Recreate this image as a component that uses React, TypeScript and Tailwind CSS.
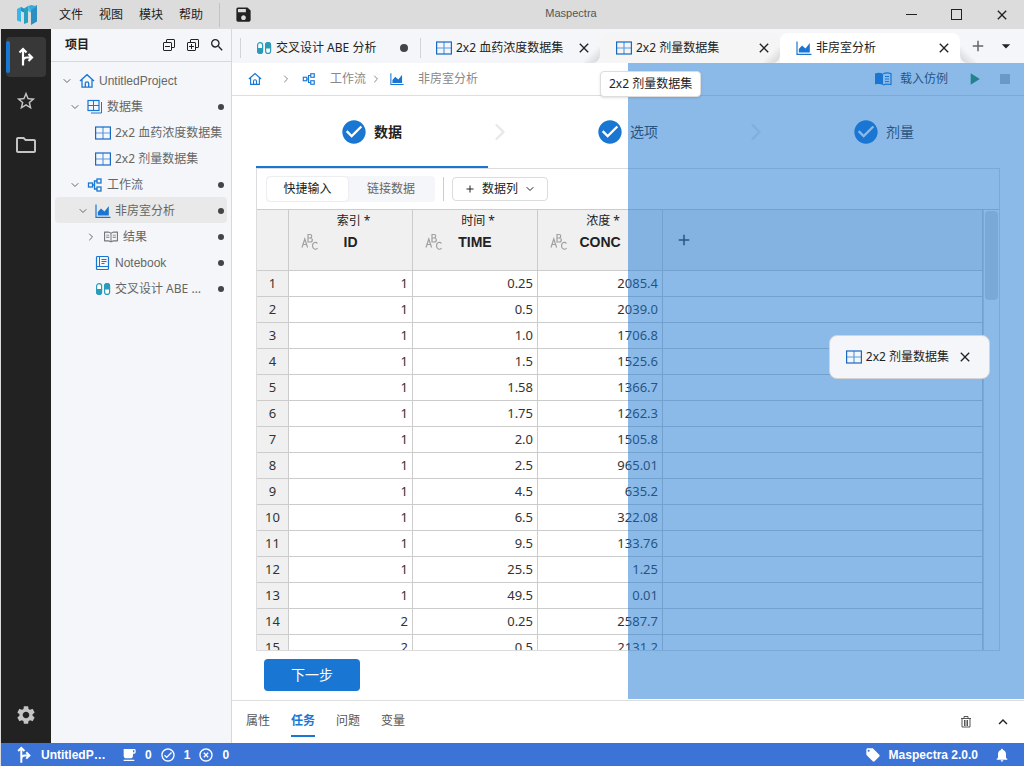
import { Fragment } from "react";
import type { ReactNode } from "react";
import { AiOutlineRead } from "react-icons/ai";
import {
  MdAdd,
  MdArrowDropDown,
  MdCheckCircle,
  MdClose,
  MdHighlightOff,
  MdKeyboardArrowUp,
  MdLocalCafe,
  MdLocalOffer,
  MdNotifications,
  MdOutlineCheckCircle,
  MdOutlineFolder,
  MdPlayArrow,
  MdSave,
  MdSearch,
  MdSettings,
  MdStarBorder,
} from "react-icons/md";
import { VscCollapseAll, VscExpandAll } from "react-icons/vsc";
import { ChevronDown, ChevronRight } from "lucide-react";

type IconProps = { className?: string };

function Logo({ className }: IconProps) {
  return (
    <svg viewBox="0 0 20 20" className={className} aria-hidden="true">
      <path d="M0 4l4-2v15l-4-1.500z" fill="#38b6ea" />
      <path d="M4 2l3 2.500v3L4 6z" fill="#1f86b8" />
      <path d="M7 3.500L11 1v16.500L7 19z" fill="#2b9fc0" />
      <path d="M4 2l3 1.500V7L4 5z" fill="#2596c4" />
      <path d="M11 1l3 2.500v4L11 6z" fill="#48c2e8" />
      <path d="M14 3l6-3v16.500L14 20z" fill="#2d8ec2" />
      <path d="M11 1l3.500-1L20 1.500 14 5z" fill="#3aa9d8" />
    </svg>
  );
}

function RouteIcon({ className }: IconProps) {
  return (
    <svg viewBox="0 0 20 20" className={className} fill="none" stroke="currentColor" strokeWidth="2.200" aria-hidden="true">
      <path d="M7 18.500V2.500M3.500 5.500L7 2l3.500 3.500M7 14.500c0-3 1.500-4 4-4h4.500M12.500 7l3.500 3.500-3.500 3.500" />
    </svg>
  );
}

function HomeIcon({ className }: IconProps) {
  return (
    <svg viewBox="0 0 16 16" className={className} fill="none" stroke="#1976d2" strokeWidth="1.300" aria-hidden="true">
      <path d="M1 8l7-6.300L15 8M3 6.500v7.700h10V6.500M6.300 14V10.500a1.700 1.700 0 0 1 3.400 0V14" />
    </svg>
  );
}

function AreaChartIcon({ className }: IconProps) {
  return (
    <svg viewBox="0 0 16 16" className={className} fill="none" aria-hidden="true">
      <path d="M1 1.500v12.800h14.500" stroke="#1976d2" strokeWidth="1.200" />
      <path d="M2.800 12.500V9L6 5.500l3.500 3L13.800 3v9.500z" fill="#1976d2" />
    </svg>
  );
}

function GridIcon({ className }: IconProps) {
  return (
    <svg viewBox="0 0 16 16" className={className} fill="none" aria-hidden="true">
      <path d="M8 2v12M1 8h14" stroke="#5b9be0" strokeWidth="1.200" />
      <rect x="0.600" y="2" width="14.800" height="12" stroke="#1769c4" strokeWidth="1.200" />
    </svg>
  );
}

function GridStackIcon({ className }: IconProps) {
  return (
    <svg viewBox="0 0 16 16" className={className} fill="none" stroke="#1976d2" aria-hidden="true">
      <rect x="1" y="1.500" width="11" height="10" strokeWidth="1.200" />
      <path d="M6.500 2v9.500M1 6.500h11M14.500 3v11H4" />
    </svg>
  );
}

function FlowIcon({ className }: IconProps) {
  return (
    <svg viewBox="0 0 16 16" className={className} fill="none" stroke="#1976d2" strokeWidth="1.300" aria-hidden="true">
      <rect x="1.500" y="6" width="4" height="4" />
      <rect x="10" y="2" width="4" height="4" />
      <rect x="10" y="10" width="4" height="4" />
      <path d="M5.500 8h2M10 4H7.500v8H10" />
    </svg>
  );
}

function NotebookIcon({ className }: IconProps) {
  return (
    <svg viewBox="0 0 16 16" className={className} fill="none" stroke="#1976d2" aria-hidden="true">
      <rect x="1.500" y="1.500" width="12" height="13" rx="1" strokeWidth="1.200" />
      <path d="M4.500 2v9.500M2 11.500h11.500M6.500 4.500h5M6.500 6.500h5M6.500 8.500h3" />
    </svg>
  );
}

function CapsuleIcon({ className }: IconProps) {
  return (
    <svg viewBox="0 0 16 16" className={className} aria-hidden="true">
      <rect x="1.600" y="2.600" width="5" height="10.800" rx="2.500" fill="#fff" stroke="#2a9cba" strokeWidth="1.200" />
      <path d="M1 8h6v3a3 3 0 0 1-6 0z" fill="#2a9cba" />
      <rect x="9.600" y="2.600" width="5" height="10.800" rx="2.500" fill="#fff" stroke="#2a9cba" strokeWidth="1.200" />
      <path d="M9 8.500h6V5a3 3 0 0 0-6 0z" fill="#2a9cba" />
    </svg>
  );
}

function ManualIcon({ className }: IconProps) {
  return (
    <svg viewBox="0 0 18 16" className={className} fill="none" aria-hidden="true">
      <path d="M1 2.500c3-1 6-.8 8 .5v11c-2-1-5-1.200-8-.500z" fill="#1976d2" />
      <path d="M9 3c2-1.300 5-1.500 8-.500v11c-3-.7-6-.5-8 .500" stroke="#1976d2" strokeWidth="1.200" />
      <path d="M11 5.500h4M11 8h4M11 10.500h4" stroke="#1976d2" />
    </svg>
  );
}

// staggered letters marking a text column
function AbcIcon() {
  return (
    <svg viewBox="0 0 18 18" className="size-[18px] text-[#a0a0a0]" fill="none" stroke="currentColor" strokeWidth="1.200" aria-hidden="true">
      <path d="M1 14.500l2.800-8.500 2.800 8.500M2 11.500h3.600" />
      <path d="M7 1.500v7.500h2.300a2 2 0 0 0 0-4H7h2a1.700 1.700 0 0 0 0-3.500z" />
      <path d="M16.500 10.500c-1.500-2-5-1.300-5 2.300s3.500 4.300 5 2.300" />
    </svg>
  );
}

function TrashIcon({ className }: IconProps) {
  return (
    <svg viewBox="0 0 16 16" className={className} fill="none" stroke="currentColor" aria-hidden="true">
      <path d="M3 4.500h10M6 4V2.500h4V4M4 4.500v8.500h8V4.500M6.500 6v6M8 6v6M9.500 6v6" />
    </svg>
  );
}

const grid = <GridIcon className="size-4 shrink-0" />;
const flow = <FlowIcon className="size-4" />;
const chart = <AreaChartIcon className="size-4 shrink-0" />;
const capsule = <CapsuleIcon className="size-4 shrink-0" />;

const menus = ["文件", "视图", "模块", "帮助"];

type TreeNode = {
  label: string;
  indent: string;
  icon: ReactNode;
  open?: boolean;
  dirty?: boolean;
  active?: boolean;
  latin?: boolean;
};

const tree: TreeNode[] = [
  { label: "UntitledProject", indent: "pl-1", icon: <HomeIcon className="size-4" />, open: true, latin: true },
  { label: "数据集", indent: "pl-3", icon: <GridStackIcon className="size-4" />, open: true, dirty: true },
  { label: "2x2 血药浓度数据集", indent: "pl-5", icon: grid },
  { label: "2x2 剂量数据集", indent: "pl-5", icon: grid },
  { label: "工作流", indent: "pl-3", icon: flow, open: true, dirty: true },
  { label: "非房室分析", indent: "pl-5", icon: chart, open: true, dirty: true, active: true },
  { label: "结果", indent: "pl-7", icon: <AiOutlineRead className="size-4 text-[#777]" />, open: false, dirty: true },
  { label: "Notebook", indent: "pl-5", icon: <NotebookIcon className="size-4" />, dirty: true, latin: true },
  { label: "交叉设计 ABE 分析", indent: "pl-5", icon: capsule, dirty: true },
];

const tabs = [
  { label: "交叉设计 ABE 分析", icon: capsule, dirty: true, style: "before:absolute before:left-0 before:h-5 before:w-px before:bg-[#d4d4d4]" },
  { label: "2x2 血药浓度数据集", icon: grid, style: "before:absolute before:left-0 before:h-5 before:w-px before:bg-[#d4d4d4]" },
  {
    label: "2x2 剂量数据集",
    icon: grid,
    style:
      "rounded-t-lg bg-[#f5f5f6] before:absolute before:bottom-0 before:-left-4 before:size-4 before:rounded-br-lg before:bg-linear-to-br before:from-transparent before:from-40% before:to-black/15",
  },
  {
    label: "非房室分析",
    icon: chart,
    active: true,
    style:
      "z-10 rounded-t-lg bg-white before:absolute before:bottom-0 before:-left-4 before:size-4 before:rounded-br-lg before:bg-linear-to-br before:from-transparent before:from-40% before:to-black/15 after:absolute after:-right-4 after:bottom-0 after:size-4 after:rounded-bl-lg after:bg-linear-to-bl after:from-transparent after:from-40% after:to-black/15",
  },
];

const steps = ["数据", "选项", "剂量"];

const columns = [
  { role: "索引", name: "ID", width: "w-[124px]" },
  { role: "时间", name: "TIME", width: "w-[125px]" },
  { role: "浓度", name: "CONC", width: "w-[125px]" },
];

const rows = [
  ["1", "0.25", "2085.4"],
  ["1", "0.5", "2039.0"],
  ["1", "1.0", "1706.8"],
  ["1", "1.5", "1525.6"],
  ["1", "1.58", "1366.7"],
  ["1", "1.75", "1262.3"],
  ["1", "2.0", "1505.8"],
  ["1", "2.5", "965.01"],
  ["1", "4.5", "635.2"],
  ["1", "6.5", "322.08"],
  ["1", "9.5", "133.76"],
  ["1", "25.5", "1.25"],
  ["1", "49.5", "0.01"],
  ["2", "0.25", "2587.7"],
  ["2", "0.5", "2131.2"],
];

function TitleBar() {
  return (
    <header className="flex h-[29px] shrink-0 items-center bg-[#dcdcdc] pl-4 text-[#222]">
      <Logo className="size-5" />
      <nav className="ml-[22px] flex gap-4">
        {menus.map((m) => (
          <button key={m} type="button">
            {m}
          </button>
        ))}
      </nav>
      <div className="ml-4 h-6 w-px bg-[#c2c2c2]" />
      <button type="button" aria-label="保存" className="ml-[14px]">
        <MdSave className="size-[19px]" />
      </button>
      <div className="flex-1 pb-0.5 text-center font-['Liberation_Sans'] text-[11px] text-[#555]">Maspectra</div>
      <button type="button" aria-label="最小化" className="flex w-[45px] justify-center">
        <span className="h-px w-[11px] bg-[#222]" />
      </button>
      <button type="button" aria-label="最大化" className="flex w-[45px] justify-center">
        <span className="size-[11px] border border-[#222]" />
      </button>
      <button type="button" aria-label="关闭" className="flex w-[45px] justify-center">
        <MdClose className="size-4" />
      </button>
    </header>
  );
}

function ActivityRail() {
  return (
    <aside className="flex w-[50px] shrink-0 flex-col items-center gap-1 bg-[#222] py-2 text-[#c4c4c4]">
      <button type="button" aria-label="项目" className="relative flex size-10 items-center justify-center rounded bg-[#383838] text-white">
        <span className="absolute inset-y-1 left-0 w-1 rounded-sm bg-[#1976d2]" />
        <RouteIcon className="size-5" />
      </button>
      <button type="button" aria-label="收藏" className="flex size-10 items-center justify-center">
        <MdStarBorder className="size-[22px]" />
      </button>
      <button type="button" aria-label="文件夹" className="flex size-10 items-center justify-center">
        <MdOutlineFolder className="size-6" />
      </button>
      <button type="button" aria-label="设置" className="mt-auto flex size-10 items-center justify-center">
        <MdSettings className="size-[22px]" />
      </button>
    </aside>
  );
}

function Sidebar() {
  return (
    <aside className="flex w-[181px] shrink-0 flex-col border-r border-[#d8d8d8] bg-[#f4f6f9]">
      <div className="flex h-[33px] items-center gap-2 border-b border-[#d8d8d8] pr-1.5 pl-3.5 text-[#222]">
        <h2 className="flex-1 text-xs font-bold">项目</h2>
        <button type="button" aria-label="全部折叠">
          <VscCollapseAll className="size-4" />
        </button>
        <button type="button" aria-label="全部展开">
          <VscExpandAll className="size-4" />
        </button>
        <button type="button" aria-label="搜索">
          <MdSearch className="size-4" />
        </button>
      </div>
      <ul className="px-1 pt-[5px] text-[#666]">
        {tree.map((node) => (
          <li
            key={node.label}
            className={`flex h-[26px] items-center gap-1 rounded pt-px pr-[3px] ${node.indent} ${node.active ? "bg-[#e9e9e9]" : ""}`}
          >
            <span className="flex w-4 shrink-0 justify-center">
              {node.open === true && <ChevronDown className="size-3" />}
              {node.open === false && <ChevronRight className="size-3" />}
            </span>
            <span className="shrink-0">{node.icon}</span>
            <span
              className={`min-w-0 flex-1 ${node.dirty ? "mr-2 truncate" : "whitespace-nowrap"} ${
                node.latin ? "font-['Liberation_Sans']" : ""
              }`}
            >
              {node.label}
            </span>
            {node.dirty && <span className="size-1.5 shrink-0 rounded-full bg-[#444]" />}
          </li>
        ))}
      </ul>
    </aside>
  );
}

function TabBar() {
  return (
    <div className="flex h-[34px] shrink-0 items-end overflow-hidden bg-[#f4f6f9] pl-2 text-[#222]">
      <div role="tablist" className="flex min-w-0">
        {tabs.map((tab) => (
          <div
            key={tab.label}
            role="tab"
            aria-selected={!!tab.active}
            className={`relative flex h-[30px] w-[180px] items-center gap-1 pr-2 pl-4 ${tab.style}`}
          >
            {tab.icon}
            <span className="min-w-0 flex-1 whitespace-nowrap">{tab.label}</span>
            {tab.dirty ? (
              <span className="mx-1 size-2 rounded-full bg-[#444]" />
            ) : (
              <button type="button" aria-label="关闭标签">
                <MdClose className="size-4" />
              </button>
            )}
          </div>
        ))}
      </div>
      <div className="flex h-[34px] flex-1 items-center justify-around px-1">
        <button type="button" aria-label="新建标签">
          <MdAdd className="size-[18px] text-[#666]" />
        </button>
        <button type="button" aria-label="标签列表">
          <MdArrowDropDown className="size-5" />
        </button>
      </div>
    </div>
  );
}

function Breadcrumb() {
  return (
    <div className="flex h-[33px] shrink-0 items-center border-b border-[#dedede] pr-3.5 pl-4 text-[#888]">
      <HomeIcon className="size-[14px]" />
      <ChevronRight className="ml-[18px] size-3" />
      <FlowIcon className="ml-2.5 size-[14px]" />
      <a href="#flow" className="ml-3.5">
        工作流
      </a>
      <ChevronRight className="ml-1 size-3" />
      <AreaChartIcon className="ml-2 size-[14px]" />
      <a href="#nca" className="ml-3.5">
        非房室分析
      </a>
      <button type="button" className="ml-auto flex items-center gap-2 text-[#333]">
        <ManualIcon className="h-4 w-[18px]" />
        载入仿例
      </button>
      <button type="button" aria-label="运行" className="ml-4">
        <MdPlayArrow className="size-5 text-[#2a8f4a]" />
      </button>
      <button type="button" aria-label="停止" className="ml-4">
        <span className="block size-2.5 bg-[#bdbdbd]" />
      </button>
    </div>
  );
}

function Stepper() {
  return (
    <ol className="flex h-[72px] shrink-0 text-sm text-[#333]">
      {steps.map((step, i) => (
        <Fragment key={step}>
          <li
            className={`flex flex-1 items-center justify-center gap-2 border-b-2 pt-0.5 ${
              i === 0 ? "border-[#1976d2] font-bold text-[#222]" : "border-transparent"
            }`}
          >
            <MdCheckCircle className="-m-0.5 size-7 text-[#1976d2]" />
            {step}
          </li>
          {i < steps.length - 1 && (
            <li aria-hidden="true" className="flex w-6 items-center justify-center">
              <ChevronRight className="size-7 shrink-0 text-[#e8e8e8]" />
            </li>
          )}
        </Fragment>
      ))}
    </ol>
  );
}

function DataTable() {
  return (
    <table className="min-w-0 flex-1 table-fixed border-separate border-spacing-0 text-[13px] text-[#333]">
      <thead>
        <tr className="h-[61px] bg-[#f0f0f0]">
          <th className="w-8 border-r border-b border-[#ccc]" />
          {columns.map((col) => (
            <th key={col.name} className={`relative border-r border-b border-[#ccc] p-0 align-top text-[#222] ${col.width}`}>
              <div className="pt-0.5 pl-1.5 text-xs leading-[18px] font-normal">{col.role} *</div>
              <div className="font-['Liberation_Sans'] text-sm leading-6">{col.name}</div>
              <span className="absolute top-[23px] left-3">
                <AbcIcon />
              </span>
            </th>
          ))}
          <th className="border-r border-b border-[#ccc] p-0 text-left">
            <button type="button" aria-label="添加列" className="ml-3 block">
              <MdAdd className="size-[18px]" />
            </button>
          </th>
        </tr>
      </thead>
      <tbody>
        {rows.map((row, i) => (
          <tr key={i} className="h-[26px] leading-5">
            <th scope="row" className="border-r border-b border-[#ccc] bg-[#f0f0f0] px-0 pt-0 pb-0.5 font-normal">
              {i + 1}
            </th>
            {row.map((value, j) => (
              <td key={j} className="border-r border-b border-[#ccc] pt-0 pr-1 pb-0.5 pl-0 text-right">
                {value}
              </td>
            ))}
            <td className="border-r border-b border-[#ccc] p-0" />
          </tr>
        ))}
      </tbody>
    </table>
  );
}

function Workspace() {
  return (
    <section className="relative flex min-h-0 flex-1 flex-col">
      <Breadcrumb />
      <div className="flex min-h-0 flex-1 flex-col px-6 pb-2">
        <Stepper />
        <div className="flex min-h-0 flex-1 flex-col border border-[#dcdcdc]">
          <div className="flex h-[41px] shrink-0 items-center border-b border-[#ccc] px-2 text-[#222]">
            <div className="ml-px flex h-[26px] rounded bg-[#f4f6f9] p-px text-[#666]">
              <button type="button" className="w-[81px] rounded bg-white text-[#222] shadow-[0_0_2px_rgba(0,0,0,0.12)]">
                快捷输入
              </button>
              <button type="button" className="w-[86px]">
                链接数据
              </button>
            </div>
            <div className="mx-2 h-6 w-px bg-[#ccc]" />
            <button type="button" className="flex h-6 w-24 items-center justify-center gap-1.5 rounded border border-[#dcdcdc]">
              <MdAdd className="size-3" />
              数据列
              <ChevronDown className="size-3" />
            </button>
          </div>
          <div className="flex min-h-0 flex-1 items-start overflow-hidden">
            <DataTable />
            <div className="w-4 self-stretch border-l border-[#dcdcdc] px-px pt-px">
              <div className="h-[89px] rounded-sm bg-[#dcdcdc]" />
            </div>
          </div>
        </div>
        <button type="button" className="mt-2 ml-2 h-8 w-24 shrink-0 rounded bg-[#1976d2] text-sm text-white">
          下一步
        </button>
      </div>

      {/* drop zone for the dragged tab */}
      <div className="pointer-events-none absolute inset-y-0 right-0 w-1/2 bg-[#1976d2]/50" />
      <div className="absolute top-[272px] right-[34px] flex h-11 items-center gap-1 rounded-lg border border-[#d4d4d4] bg-[#f4f6f9] px-4 text-[#222]">
        {grid}
        <span>2x2 剂量数据集</span>
        <MdClose className="ml-1 size-4" />
      </div>
      <div role="tooltip" className="absolute top-2 left-[368px] flex h-[26px] items-center rounded border border-[#ddd] bg-white px-2 text-[#222] shadow">
        2x2 剂量数据集
      </div>
    </section>
  );
}

function BottomPanel() {
  return (
    <div className="mt-px flex h-[43px] shrink-0 items-center border-t border-[#dedede] pr-3 pl-3.5 text-[#555]">
      <div className="flex flex-1 gap-[21px]">
        {["属性", "任务", "问题", "变量"].map((label) => (
          <button
            key={label}
            type="button"
            className={`h-[30px] border-b-2 ${label === "任务" ? "border-[#1976d2] font-bold text-[#1976d2]" : "border-transparent"}`}
          >
            {label}
          </button>
        ))}
      </div>
      <button type="button" aria-label="清空">
        <TrashIcon className="size-4" />
      </button>
      <button type="button" aria-label="展开面板" className="ml-5 text-[#222]">
        <MdKeyboardArrowUp className="size-[18px]" />
      </button>
    </div>
  );
}

function StatusBar() {
  return (
    <footer className="flex h-[23px] shrink-0 items-center bg-[#3b73d6] pr-3.5 pl-[14px] font-['Liberation_Sans'] font-bold text-white">
      <RouteIcon className="size-[18px]" />
      <span className="ml-2 w-[66px] truncate">UntitledProject</span>
      <MdLocalCafe className="ml-3.5 size-4" />
      <span className="ml-2">0</span>
      <MdOutlineCheckCircle className="ml-2 size-4" />
      <span className="ml-2">1</span>
      <MdHighlightOff className="ml-2 size-4" />
      <span className="ml-2">0</span>
      <MdLocalOffer className="ml-auto size-4" />
      <span className="ml-2">Maspectra 2.0.0</span>
      <MdNotifications className="ml-4 size-4" />
    </footer>
  );
}

export default function App() {
  return (
    <div className="flex h-screen flex-col overflow-hidden border-l border-[#dcdcdc] bg-white font-['Noto_Sans','Noto_Sans_CJK_SC',sans-serif] text-xs">
      <TitleBar />
      <div className="flex min-h-0 flex-1">
        <ActivityRail />
        <Sidebar />
        <main className="flex min-w-0 flex-1 flex-col">
          <TabBar />
          <Workspace />
          <BottomPanel />
        </main>
      </div>
      <StatusBar />
    </div>
  );
}
